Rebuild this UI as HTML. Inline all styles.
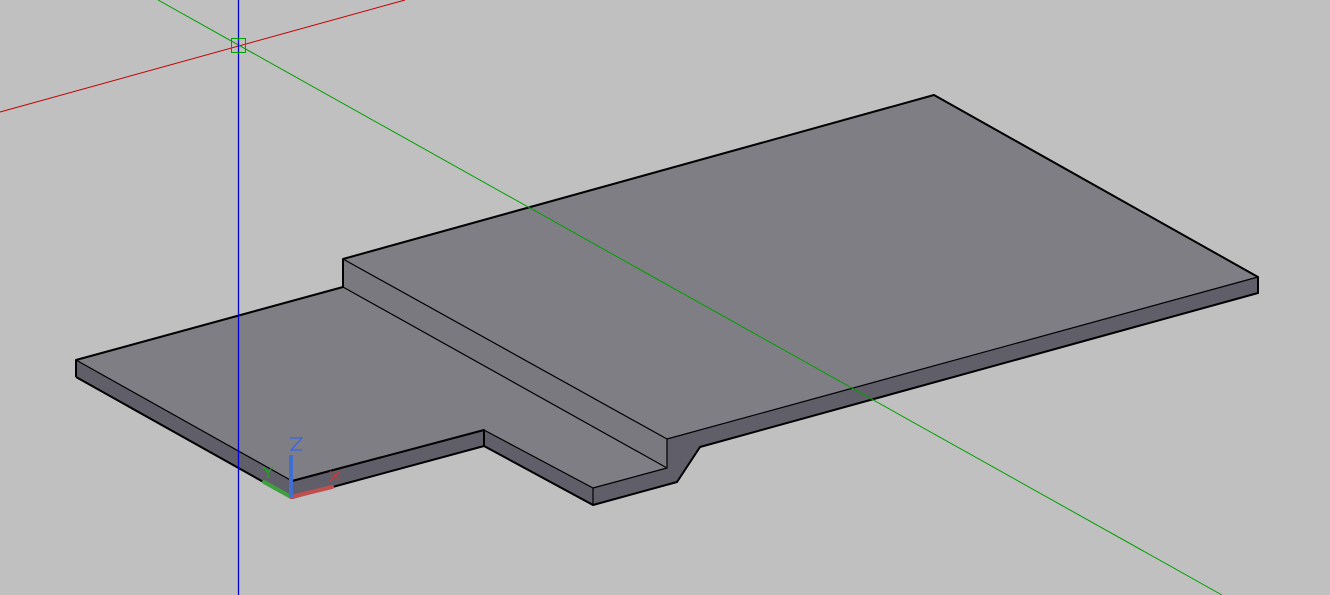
<!DOCTYPE html>
<html><head><style>html,body{margin:0;padding:0;background:#c0c0c0;overflow:hidden}svg{display:block}</style></head>
<body>
<svg width="1330" height="595" viewBox="0 0 1330 595" xmlns="http://www.w3.org/2000/svg">
<rect width="1330" height="595" fill="#c0c0c0"/>
<polygon points="76,360 292,481 292,498 76,377" fill="#5f5e69"/>
<polygon points="292,481 484,430 484,446 292,498" fill="#5f5e69"/>
<polygon points="484,430 593,488 593,505 484,446" fill="#5f5e69"/>
<polygon points="593,488 667,468 667,439 1258,277 1258,293 700,447 677,482 593,505" fill="#5f5e69"/>
<polygon points="343,259 667,439 667,468 343,287" fill="#7a7980"/>
<polygon points="76,360 343,287 667,468 593,488 484,430 292,481" fill="#7f7e84"/>
<polygon points="343,259 934,95 1258,277 667,439" fill="#7f7e84"/>
<g fill="none" stroke="#000" stroke-linejoin="round">
<polyline stroke-width="2" points="76,377 76,360 343,287 343,259 934,95 1258,277 1258,293 700,447 677,482 593,505 484,446 484,430 292,481"/>
<polyline stroke-width="2" points="76,377 292,498 484,446"/>
<polyline stroke-width="1.2" points="76,360 292,481"/>
<polyline stroke-width="1.2" points="343,287 667,468 667,439 343,259"/>
<polyline stroke-width="1.2" points="593,488 593,505"/>
<polyline stroke-width="1.2" points="593,488 667,468"/>
<polyline stroke-width="1.2" points="667,439 1258,277"/>
<polyline stroke-width="1.2" points="484,430 593,488"/>
</g>
<line x1="0" y1="112" x2="405" y2="0" stroke="#c00000" stroke-width="1"/>
<line x1="158" y1="0" x2="1222" y2="595" stroke="#00a000" stroke-width="1"/>
<line x1="238.5" y1="0" x2="238.5" y2="595" stroke="#0000d0" stroke-width="1.3"/>
<rect x="231.5" y="38.5" width="14" height="14" fill="none" stroke="#00a000" stroke-width="1"/>
<line x1="291" y1="497" x2="264" y2="482" stroke="#3fa03f" stroke-width="4" stroke-linecap="round"/>
<line x1="291" y1="497" x2="332" y2="487" stroke="#c05050" stroke-width="4" stroke-linecap="round"/>
<line x1="291" y1="497" x2="291" y2="455" stroke="#3f6fd0" stroke-width="4"/>
<polyline points="290,438 302,438 291,450 302,450" fill="none" stroke="#2060ff" stroke-width="1"/>
<polyline points="263,467 268,472 273,467" fill="none" stroke="#00c000" stroke-width="1"/>
<line x1="268" y1="472" x2="268" y2="478" stroke="#00c000" stroke-width="1"/>
<line x1="330" y1="471" x2="340" y2="481" stroke="#e03030" stroke-width="1"/>
<line x1="340" y1="471" x2="330" y2="481" stroke="#e03030" stroke-width="1"/>
</svg>
</body></html>
